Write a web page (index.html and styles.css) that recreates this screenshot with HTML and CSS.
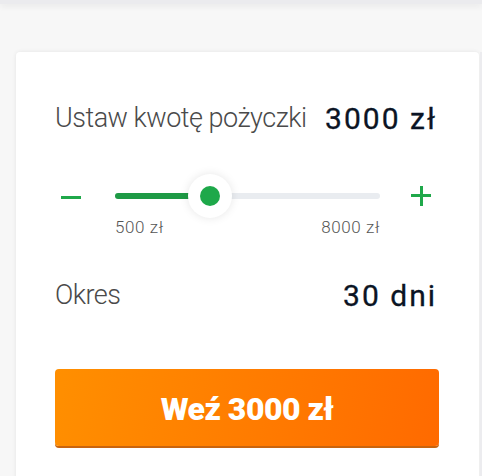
FILE: index.html
```html
<!DOCTYPE html>
<html lang="pl">
<head>
<meta charset="utf-8">
<link rel="stylesheet" href="styles.css">
</head>
<body>
<div class="topbar"></div>
<div class="page">
  <div class="card">
    <div class="row amount-row">
      <span class="label">Ustaw kwotę pożyczki</span>
      <span class="value">3000 zł</span>
    </div>
    <div class="slider-row">
      <span class="minus"></span>
      <div class="slider">
        <div class="track">
          <div class="fill" style="width: 95px"></div>
          <div class="thumb" style="left: 95px"><span class="dot"></span></div>
        </div>
        <div class="limits">
          <span>500 zł</span>
          <span>8000 zł</span>
        </div>
      </div>
      <span class="plus"></span>
    </div>
    <div class="row period-row">
      <span class="label">Okres</span>
      <span class="value">30 dni</span>
    </div>
    <button class="cta">Weź 3000 zł</button>
  </div>
  <div class="edge"></div>
</div>
</body>
</html>
```

FILE: styles.css
```css
* { box-sizing: border-box; }
html, body { margin: 0; padding: 0; }
body {
  background: #f7f7f7;
  font-family: Roboto, "Liberation Sans", sans-serif;
  width: 482px;
  height: 476px;
  overflow: hidden;
}
.topbar {
  height: 4px;
  background: #ebebee;
  box-shadow: 0 2px 6px rgba(0,0,0,0.08);
}
.page {
  display: flex;
  padding: 48px 0 0 16px;
}
.card {
  width: 463px;
  height: 430px;
  background: #fff;
  border-radius: 4px;
  box-shadow: 0 0 4px rgba(0,0,0,0.08);
  padding: 46px 44px 0 39px;
}
.edge {
  width: 2px;
  margin-left: 1px;
  height: 430px;
  background: #ececef;
}
.row {
  display: flex;
  justify-content: space-between;
  align-items: center;
}
.label {
  font-size: 27px;
  font-weight: 300;
  color: #4a4a4a;
  letter-spacing: -0.5px;
}
.value {
  font-size: 30px;
  font-weight: 400;
  color: #0b1424;
  letter-spacing: 2px;
  margin-right: -2px;
  -webkit-text-stroke: 0.3px #0b1424;
}
.amount-row { height: 40px; }
.slider-row {
  display: flex;
  align-items: flex-start;
  margin-top: 40px;
  height: 60px;
}
.minus {
  width: 20px;
  height: 3px;
  background: #1fa84a;
  margin: 18px 0 0 6px;
}
.slider {
  width: 265px;
  margin-left: 34px;
}
.track {
  position: relative;
  height: 6px;
  margin-top: 15px;
  border-radius: 3px;
  background: #e9ecf0;
}
.fill {
  height: 6px;
  border-radius: 3px;
  background: #1e9a45;
}
.thumb {
  position: absolute;
  top: 3px;
  width: 44px;
  height: 44px;
  margin: -22px 0 0 -22px;
  border-radius: 50%;
  background: #fff;
  box-shadow: 0 0 10px rgba(0,0,0,0.1);
  display: flex;
  align-items: center;
  justify-content: center;
}
.dot {
  width: 20px;
  height: 20px;
  border-radius: 50%;
  background: #1ea84a;
}
.limits {
  display: flex;
  justify-content: space-between;
  margin-top: 18px;
  font-size: 17px;
  font-weight: 300;
  color: #555;
  letter-spacing: 0.6px;
}
.plus {
  position: relative;
  width: 20px;
  height: 20px;
  margin: 8px 0 0 31px;
}
.plus::before, .plus::after {
  content: "";
  position: absolute;
  background: #1fa84a;
}
.plus::before { left: 0; top: 8px; width: 20px; height: 3px; }
.plus::after { left: 9px; top: 0; width: 3px; height: 20px; }
.period-row {
  margin-top: 37px;
  height: 40px;
}
.cta {
  display: block;
  width: 384px;
  height: 77px;
  margin: 54px 0 0 0;
  border: none;
  border-radius: 4px;
  background: linear-gradient(100deg, #ff8f00 0%, #ff6a00 100%);
  box-shadow: 0 2px 0 #c9640e;
  color: #fff;
  font-family: Roboto, "Liberation Sans", sans-serif;
  font-size: 32px;
  font-weight: 900;
  letter-spacing: -0.5px;
  padding-top: 4px;
}
```
